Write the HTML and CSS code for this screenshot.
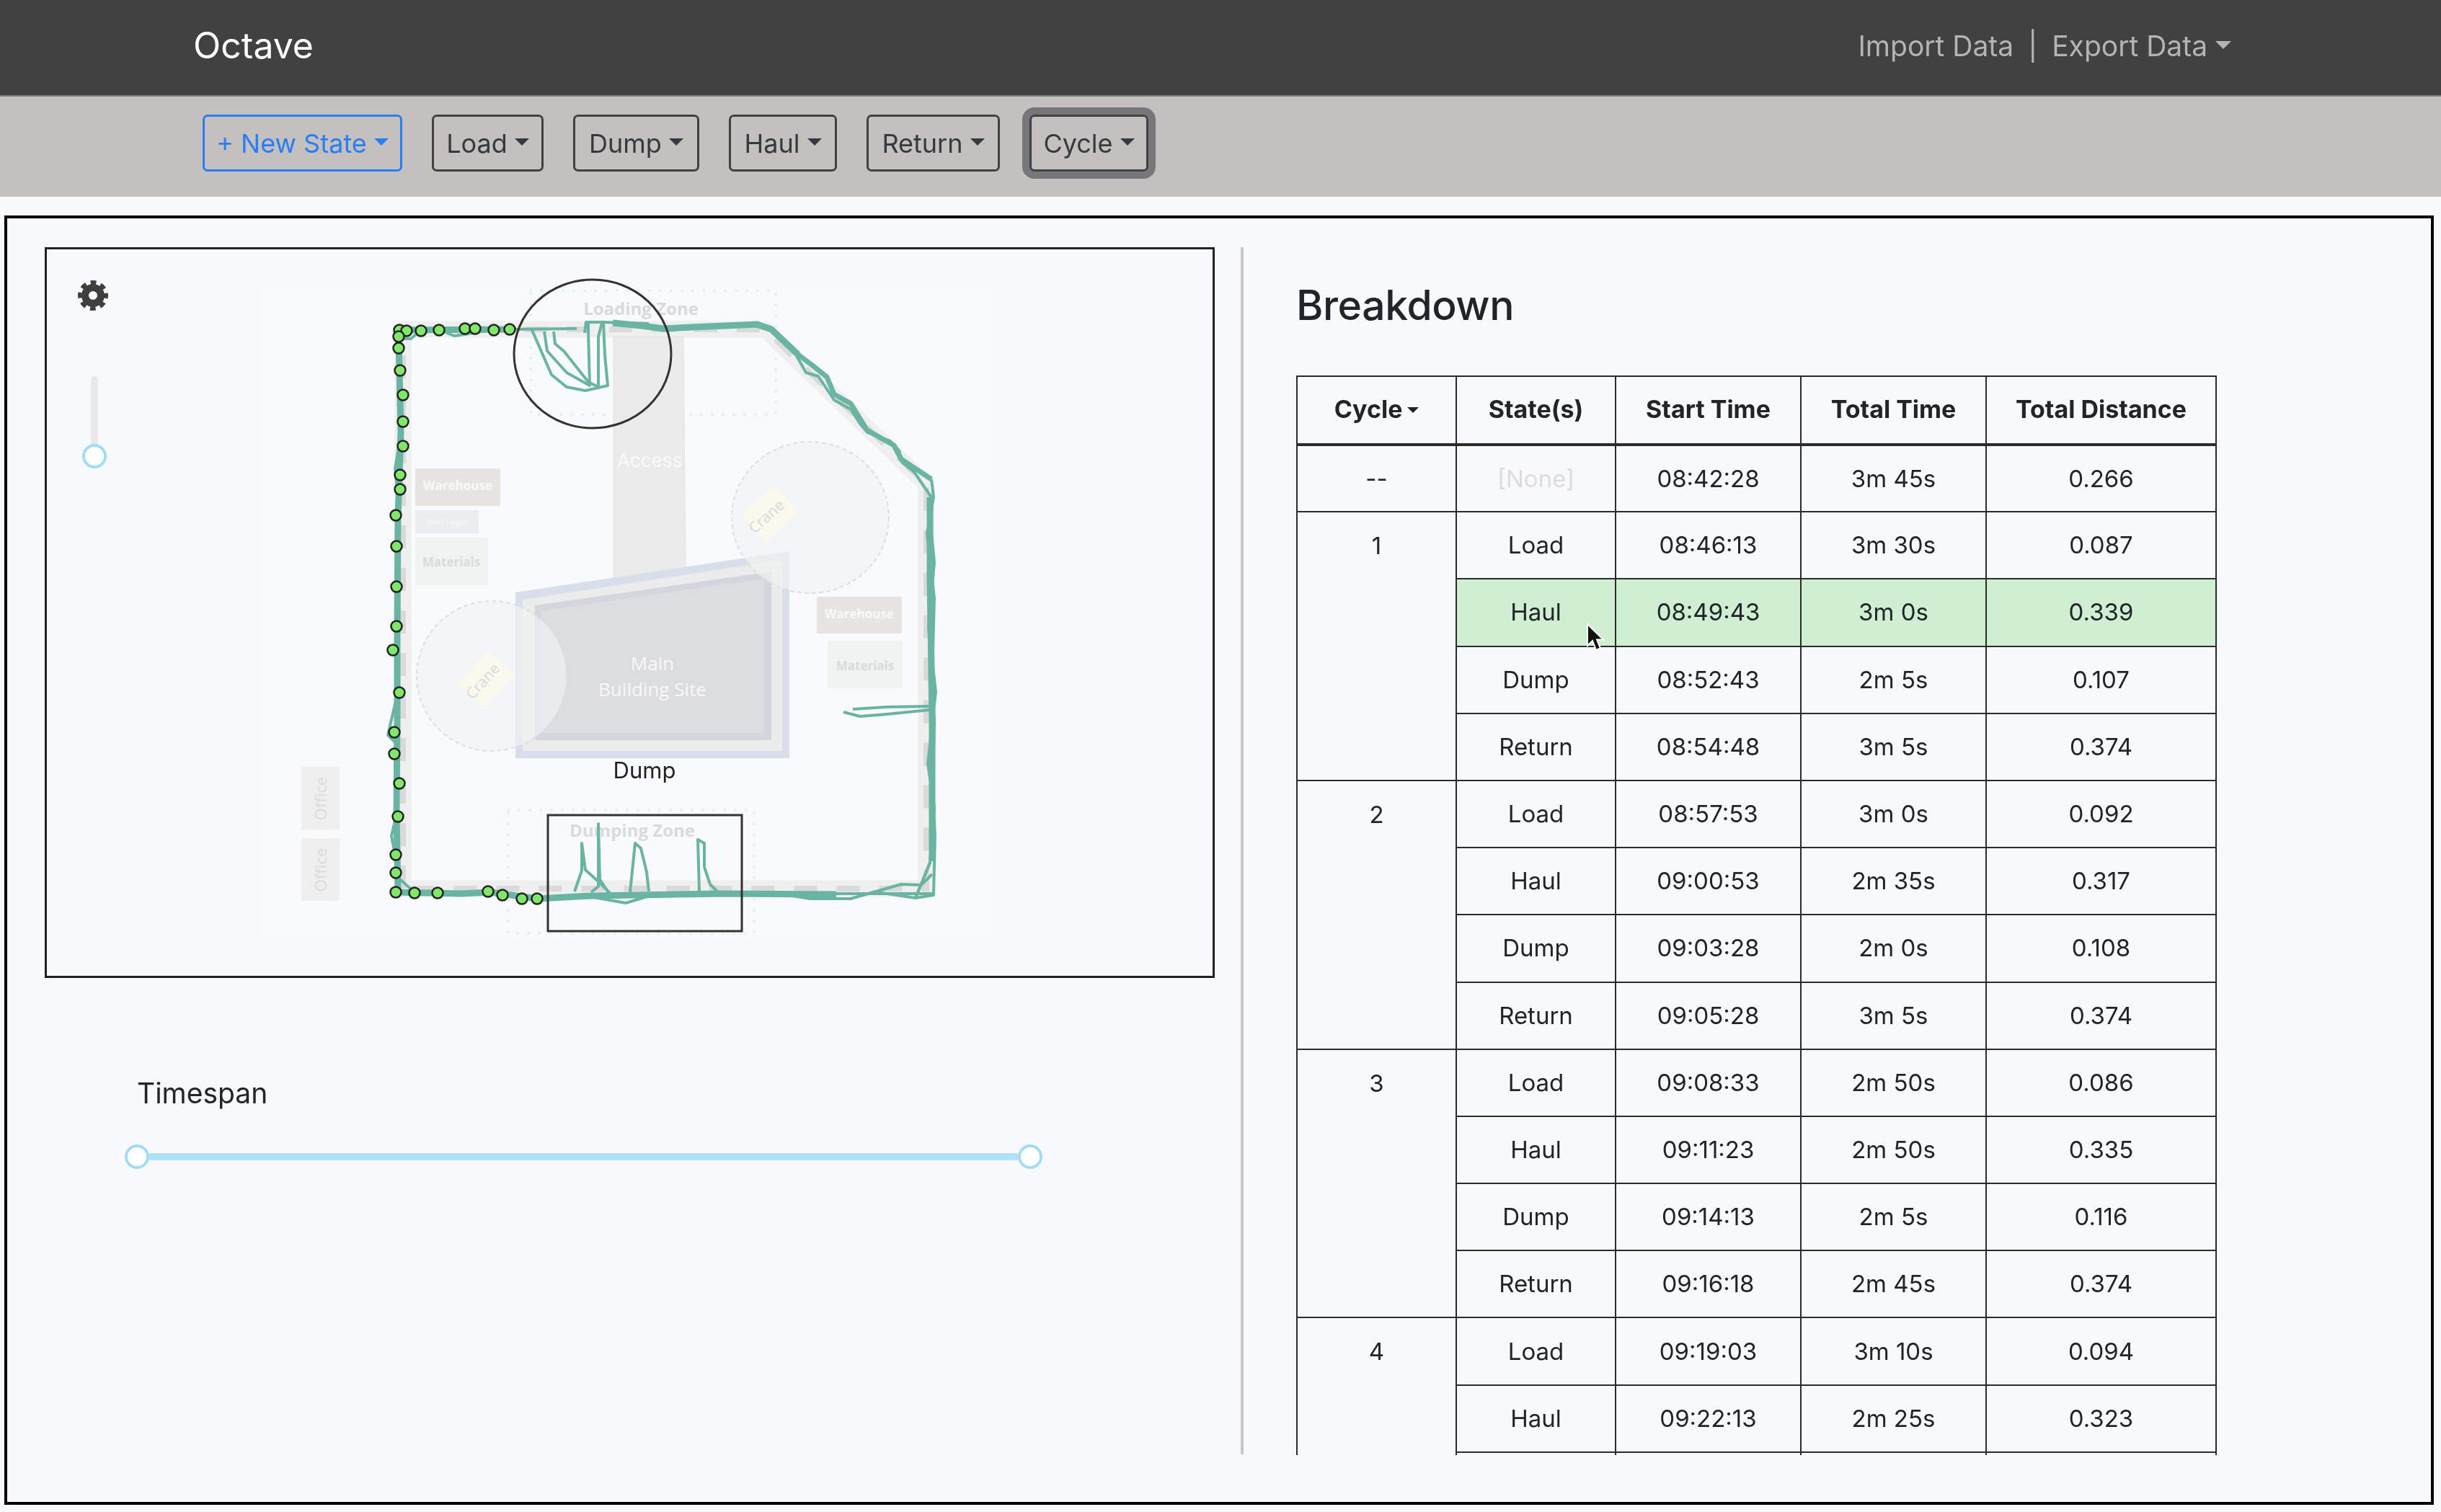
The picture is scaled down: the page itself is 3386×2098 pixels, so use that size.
FILE: index.html
```html
<!DOCTYPE html>
<html lang="en">
<head>
<meta charset="utf-8">
<title>Octave</title>
<link rel="stylesheet" href="styles.css">
</head>
<body>
<header class="navbar">
  <span class="brand">Octave</span>
  <nav class="nav-links">
    <span>Import Data</span><span class="sep">|</span><span class="caret-after">Export Data</span>
  </nav>
</header>
<div class="toolbar">
  <button class="btn btn-new w-new">+ New State</button>
  <button class="btn w-load">Load</button>
  <button class="btn w-dump">Dump</button>
  <button class="btn w-haul">Haul</button>
  <button class="btn w-return">Return</button>
  <button class="btn btn-focus w-cycle">Cycle</button>
</div>
<main class="frame">
  <section class="left">
    <div class="map">
      <svg class="map-svg" viewBox="64 345 1619 1010" xmlns="http://www.w3.org/2000/svg">
        <rect x="358" y="396" width="1032" height="914" fill="#f9fafb"/>
        <!-- zones -->
        <rect class="zone" x="736" y="403" width="340" height="172"/>
        <rect class="zone" x="705" y="1124" width="341" height="171"/>
        <text class="lbl-zone" x="889" y="437">Loading Zone</text>
        <text class="lbl-zone" x="877" y="1161">Dumping Zone</text>
        <!-- road -->
        <path class="road" d="M559 1233V457H1061L1285 672V1233Z"/>
        <path class="road-dash" d="M559 1233V457H1061L1285 672V1233Z"/>
        <!-- access -->
        <polygon points="851,467 948,467 951,792 851,810" fill="#ebebec" stroke="#e2e2e3" stroke-width="1"/>
        <text class="lbl-white" x="901" y="648">Access</text>
        <!-- buildings -->
        <polygon points="715,822 1095,765 1095,1052 715,1052" fill="#d9dfea"/>
        <polygon points="725,832 1085,777 1085,1042 725,1042" fill="#ececec"/>
        <polygon points="742,840 1070,793 1070,1027 742,1027" fill="#d3d7dd"/>
        <polygon points="750,848 1060,803 1060,1017 750,1017" fill="#dcdddf"/>
        <text class="lbl-main" x="905" y="930">Main</text>
        <text class="lbl-main" x="905" y="966">Building Site</text>
        <!-- cranes -->
        <ellipse class="crane" cx="1124" cy="718" rx="109" ry="105"/>
        <ellipse class="crane" cx="682" cy="938" rx="104" ry="104"/>
        <rect class="crane-tag" x="1037" y="688" width="62" height="50" transform="rotate(-42 1068 713)"/>
        <rect class="crane-tag" x="643" y="918" width="62" height="50" transform="rotate(-48 674 943)"/>
        <text class="lbl-crane" transform="translate(1068 722) rotate(-42)">Crane</text>
        <text class="lbl-crane" transform="translate(675 950) rotate(-48)">Crane</text>
        <!-- stores -->
        <rect x="576" y="650" width="118" height="52" fill="#e8e4e1"/>
        <text class="lbl-store-w" x="635" y="680">Warehouse</text>
        <rect x="576" y="708" width="88" height="32" fill="#ecedee"/>
        <text class="lbl-tiny" x="620" y="728">Steel Depot</text>
        <rect x="576" y="746" width="101" height="66" fill="#f1f2f2"/>
        <text class="lbl-store" x="626" y="786">Materials</text>
        <rect x="1133" y="828" width="118" height="51" fill="#e8e4e1"/>
        <text class="lbl-store-w" x="1192" y="858">Warehouse</text>
        <rect x="1148" y="889" width="104" height="66" fill="#f1f2f2"/>
        <text class="lbl-store" x="1200" y="930">Materials</text>
        <rect class="office" x="418" y="1064" width="53" height="87"/>
        <rect class="office" x="418" y="1163" width="53" height="87"/>
        <text class="lbl-office" transform="translate(453 1108) rotate(-90)">Office</text>
        <text class="lbl-office" transform="translate(453 1207) rotate(-90)">Office</text>
        <!-- tracks -->
        <g class="track">
          <polyline class="thick" points="553,458 707,457"/>
          <polyline points="610,458 630,466 650,463 680,458"/>
          <polyline points="707,457 800,456"/>
          <polyline points="738,458 765,520 786,537 812,542 843,535 839,493 837,448"/>
          <polyline points="755,460 759,487 786,517 818,535 816,460 816,447"/>
          <polyline points="768,460 770,477 782,487 816,530 830,537 830,467 835,448"/>
          <polyline points="811,462 813,447 835,447 900,449"/>
          <polyline class="thick" points="850,448 890,452 920,456 960,454 1050,450 1070,457 1107,492"/>
          <polyline class="mid" points="1070,457 1107,492 1127,507 1147,523 1157,547 1180,560 1203,597 1240,618 1250,637 1292,665"/>
          <polyline points="1100,485 1118,517 1135,522 1147,540 1157,555 1180,568 1193,588 1203,600 1235,612 1247,625 1252,642 1268,655 1292,690"/>
          <polyline points="1292,665 1295,690 1286,740 1296,830 1293,940 1296,1000 1294,1100 1297,1160 1295,1242 1270,1246"/>
          <polyline class="thick" points="1290,690 1290,800 1293,1000 1293,1100 1293,1195"/>
          <polyline points="1288,700 1296,780 1288,870 1298,960 1287,1060 1296,1120 1290,1197 1270,1246"/>
          <polyline points="1183,984 1230,981 1290,980"/>
          <polyline points="1170,988 1193,994 1230,991 1290,985"/>
          <polyline class="thick" points="549,1238 640,1240 680,1238 745,1247 820,1243 1000,1240 1160,1241"/>
          <polyline points="1093,1242 1123,1247 1180,1247 1250,1227 1278,1228 1293,1213"/>
          <polyline points="1217,1238 1270,1246 1290,1197"/>
          <polyline points="1140,1240 1295,1240"/>
          <polyline points="812,1243 868,1253 904,1242"/>
          <polyline points="797,1237 807,1208 807,1170 812,1207 832,1225 849,1242"/>
          <polyline points="820,1238 830,1230 830,1143 832,1220 845,1240"/>
          <polyline points="874,1238 881,1170 889,1177 897,1210 900,1237"/>
          <polyline points="970,1237 968,1165 977,1170 977,1203 985,1227 995,1237"/>
          <polyline class="thick" points="553,470 556,600 552,720 551,880 551,1000 550,1130 552,1238"/>
          <polyline points="553,620 548,650 552,690"/>
          <polyline points="552,960 538,1020 548,1030"/>
          <polyline points="550,1130 543,1160 549,1190"/>
          <polyline points="556,470 570,470 584,458"/>
          <polyline points="549,1215 575,1238"/>
        </g>
        <!-- selection shapes -->
        <ellipse class="select" cx="822" cy="491" rx="109" ry="103"/>
        <rect class="select" x="760" y="1131" width="269" height="161"/>
        <text class="lbl-dump" x="894" y="1080">Dump</text>
        <!-- path points -->
        <g class="pts">
          <circle cx="554" cy="458" r="7.5"/><circle cx="564" cy="459" r="7.5"/><circle cx="584" cy="459" r="7.5"/><circle cx="609" cy="458" r="7.5"/><circle cx="645" cy="456" r="7.5"/><circle cx="659" cy="456" r="7.5"/><circle cx="685" cy="458" r="7.5"/><circle cx="707" cy="457" r="7.5"/><circle cx="553" cy="467" r="7.5"/><circle cx="553" cy="483" r="7.5"/><circle cx="555" cy="514" r="7.5"/><circle cx="559" cy="548" r="7.5"/><circle cx="559" cy="585" r="7.5"/><circle cx="559" cy="619" r="7.5"/><circle cx="555" cy="659" r="7.5"/><circle cx="555" cy="679" r="7.5"/><circle cx="549" cy="715" r="7.5"/><circle cx="550" cy="758" r="7.5"/><circle cx="550" cy="814" r="7.5"/><circle cx="550" cy="869" r="7.5"/><circle cx="545" cy="902" r="7.5"/><circle cx="554" cy="961" r="7.5"/><circle cx="547" cy="1016" r="7.5"/><circle cx="547" cy="1046" r="7.5"/><circle cx="554" cy="1087" r="7.5"/><circle cx="552" cy="1133" r="7.5"/><circle cx="549" cy="1186" r="7.5"/><circle cx="549" cy="1211" r="7.5"/><circle cx="549" cy="1238" r="7.5"/><circle cx="575" cy="1239" r="7.5"/><circle cx="607" cy="1239" r="7.5"/><circle cx="677" cy="1237" r="7.5"/><circle cx="697" cy="1242" r="7.5"/><circle cx="724" cy="1247" r="7.5"/><circle cx="745" cy="1247" r="7.5"/>
        </g>
      </svg>
      <svg class="gear" viewBox="0 0 44 44" xmlns="http://www.w3.org/2000/svg">
        <circle class="gear-teeth" cx="22" cy="22" r="17.5"/>
        <circle class="gear-ring" cx="22" cy="22" r="11"/>
      </svg>
      <div class="vslider"><span class="vtrack"></span><span class="thumb"></span></div>
    </div>
    <div class="timespan">
      <div class="timespan-label">Timespan</div>
      <div class="hslider"><span class="thumb"></span><span class="htrack"></span><span class="thumb"></span></div>
    </div>
  </section>
  <div class="divider"></div>
  <section class="right">
    <h1 class="title">Breakdown</h1>
    <div class="table-wrap">
      <table class="grid">
        <colgroup><col class="c1"><col class="c2"><col class="c3"><col class="c3"><col class="c5"></colgroup>
        <thead>
          <tr><th><span class="caret-sm">Cycle</span></th><th>State(s)</th><th>Start Time</th><th>Total Time</th><th>Total Distance</th></tr>
        </thead>
        <tbody>
          <tr><td class="dash">--</td><td class="none">[None]</td><td>08:42:28</td><td>3m 45s</td><td>0.266</td></tr>
          <tr><td rowspan="4" class="cyc">1</td><td>Load</td><td>08:46:13</td><td>3m 30s</td><td>0.087</td></tr>
          <tr class="hl"><td>Haul</td><td>08:49:43</td><td>3m 0s</td><td>0.339</td></tr>
          <tr><td>Dump</td><td>08:52:43</td><td>2m 5s</td><td>0.107</td></tr>
          <tr><td>Return</td><td>08:54:48</td><td>3m 5s</td><td>0.374</td></tr>
          <tr><td rowspan="4" class="cyc">2</td><td>Load</td><td>08:57:53</td><td>3m 0s</td><td>0.092</td></tr>
          <tr><td>Haul</td><td>09:00:53</td><td>2m 35s</td><td>0.317</td></tr>
          <tr><td>Dump</td><td>09:03:28</td><td>2m 0s</td><td>0.108</td></tr>
          <tr><td>Return</td><td>09:05:28</td><td>3m 5s</td><td>0.374</td></tr>
          <tr><td rowspan="4" class="cyc">3</td><td>Load</td><td>09:08:33</td><td>2m 50s</td><td>0.086</td></tr>
          <tr><td>Haul</td><td>09:11:23</td><td>2m 50s</td><td>0.335</td></tr>
          <tr><td>Dump</td><td>09:14:13</td><td>2m 5s</td><td>0.116</td></tr>
          <tr><td>Return</td><td>09:16:18</td><td>2m 45s</td><td>0.374</td></tr>
          <tr><td rowspan="3" class="cyc">4</td><td>Load</td><td>09:19:03</td><td>3m 10s</td><td>0.094</td></tr>
          <tr><td>Haul</td><td>09:22:13</td><td>2m 25s</td><td>0.323</td></tr>
          <tr class="cutoff"><td></td><td></td><td></td><td></td></tr>
        </tbody>
      </table>
      <svg class="cursor" viewBox="0 0 26 42" xmlns="http://www.w3.org/2000/svg"><path d="M2 2V32L9 25L14 38L20 35.500L15 23.500H24Z" fill="#111" stroke="#fff" stroke-width="2"/></svg>
    </div>
  </section>
</main>
</body>
</html>
```
FILE: styles.css
```css
* { box-sizing: border-box; }
html, body { margin: 0; padding: 0; }
body {
  width: 3386px;
  height: 2098px;
  overflow: hidden;
  background: #f8f9fa;
  color: #212529;
  font-family: Inter, "Liberation Sans", sans-serif;
  filter: blur(.6px);
}

/* navbar */
.navbar {
  height: 134px;
  background: #414141;
  border-bottom: 2px solid #7a7a7a;
  display: flex;
  align-items: center;
  justify-content: space-between;
  padding: 0 291px 6px 268px;
}
.brand { color: #fff; font-size: 50px; font-weight: 400; }
.nav-links { display: flex; align-items: center; color: #b4b4b4; font-size: 39px; }
.sep { margin: 0 20px; }
.caret-after::after, .btn::after, .caret-sm::after {
  content: "";
  display: inline-block;
  vertical-align: .255em;
  margin-left: .28em;
  border-top: .3em solid currentColor;
  border-left: .3em solid transparent;
  border-right: .3em solid transparent;
}

/* toolbar */
.toolbar {
  height: 139px;
  background: #c3c0be;
  display: flex;
  align-items: flex-start;
  gap: 41px;
  padding: 25px 0 0 281px;
}
.btn {
  height: 79px;
  padding: 0;
  background: transparent;
  border: 3px solid #414141;
  border-radius: 7px;
  color: #343a40;
  font: 400 36px Inter, "Liberation Sans", sans-serif;
  white-space: nowrap;
}
.w-new { width: 277px; }
.w-load { width: 155px; }
.w-dump { width: 175px; }
.w-haul { width: 150px; }
.w-return { width: 185px; }
.w-cycle { width: 165px; }
.btn-new { border-color: #2a7ef5; color: #2a7ef5; }
.btn-focus { box-shadow: 0 0 0 10px #77767a; }

/* frame */
.frame {
  margin: 26px 0 0 6px;
  width: 3370px;
  height: 1789px;
  border: 4px solid #000;
  display: flex;
  padding: 40px 0 66px 52px;
}
.left { width: 1623px; flex: none; }
.map {
  position: relative;
  height: 1014px;
  border: 3px solid #222;
}
.map-svg { position: absolute; left: -1px; top: -1px; display: block; width: 1619px; height: 1010px; }
.gear { position: absolute; left: 42px; top: 42px; width: 44px; height: 44px; }
.gear-teeth { fill: none; stroke: #3f3f3f; stroke-width: 7; stroke-dasharray: 7.5 6.24; stroke-dashoffset: 3.75; }
.gear-ring { fill: none; stroke: #3f3f3f; stroke-width: 10; }
.vslider {
  position: absolute;
  left: 49px;
  top: 176px;
  width: 34px;
  display: flex;
  flex-direction: column;
  align-items: center;
}
.vtrack { width: 10px; height: 97px; margin-bottom: -3px; background: #e9e9e9; border-radius: 5px 5px 0 0; }
.thumb {
  flex: none;
  width: 34px;
  height: 34px;
  border-radius: 50%;
  background: #fff;
  border: 4px solid #a4dcf6;
  position: relative;
}

/* map svg styling */
.zone { fill: none; stroke: #dcf2ea; stroke-width: 4; stroke-dasharray: 0 15; stroke-linecap: round; }
.road { fill: none; stroke: #efefef; stroke-width: 23; stroke-linejoin: round; }
.road-dash { fill: none; stroke: #dadada; stroke-width: 8; stroke-dasharray: 32 27; }
.crane { fill: #f1f2f2; fill-opacity: .65; stroke: #dedfdf; stroke-width: 2; stroke-dasharray: 6 4; }
.crane-tag { fill: #fbf8ed; }
.office { fill: #efefef; }
.track polyline { fill: none; stroke: #69b4a2; stroke-width: 4; stroke-linejoin: round; }
.track .thick { stroke-width: 9; }
.track .mid { stroke-width: 7; }
.select { fill: none; stroke: #333; stroke-width: 3; }
.pts circle { fill: #7fe868; stroke: #222; stroke-width: 2.5; }
.map-svg text { text-anchor: middle; font-family: "Open Sans", "Noto Sans", sans-serif; }
.lbl-zone { font-size: 24px; font-weight: 700; fill: #d9dadb; }
.map-svg .lbl-white { font-size: 26px; fill: #fafafa; font-family: Inter, sans-serif; }
.lbl-main { font-size: 26px; fill: #f8f8f9; }
.lbl-crane { font-size: 21px; fill: #d8dadd; }
.lbl-store-w { font-size: 17px; font-weight: 700; fill: #f9f8f7; }
.lbl-tiny { font-size: 10px; font-weight: 700; fill: #f6f6f6; }
.lbl-store { font-size: 17px; font-weight: 700; fill: #dadbdc; }
.lbl-office { font-size: 22px; fill: #dadbdc; }
.map-svg .lbl-dump { font-family: Inter, sans-serif; font-size: 31px; fill: #222; }

/* timespan */
.timespan { padding: 136px 0 0 111px; }
.timespan-label { font-size: 39px; line-height: 48px; margin-left: 17px; }
.hslider { display: flex; align-items: center; width: 1273px; margin-top: 47px; }
.htrack { flex: 1; height: 10px; background: #b0e2f8; }

/* divider */
.divider { flex: none; width: 4px; margin-left: 36px; background: #c8c8ca; }

/* right */
.right { flex: none; width: 1300px; margin-left: 73px; }
.title { margin: 0; font-size: 57px; font-weight: 500; line-height: 70px; padding-top: 46px; color: #212529; letter-spacing: -.4px; }
.table-wrap { position: relative; margin-top: 62px; height: 1498px; overflow: hidden; }
.grid { border-collapse: collapse; table-layout: fixed; width: 1275px; font-size: 33px; text-align: center; }
.c1, .c2 { width: 221px; }
.c3 { width: 257px; }
.c5 { width: 319px; }
.grid th, .grid td { border: 2px solid #2b2b2b; padding: 0 0 1px; text-align: center; }
.grid thead tr { height: 95px; }
.grid th { font-weight: 700; font-size: 34px; border-bottom-width: 4px; padding-bottom: 3px; }
.grid tbody tr { height: 93.200px; }
.caret-sm::after { border-top-width: .25em; border-left-width: .25em; border-right-width: .25em; vertical-align: .2em; margin-left: .2em; }
.none { color: #dcdcde; }
.hl td { background: #cfeed2; }
.cyc { vertical-align: top; padding-top: 26px !important; }
.grid .cutoff td { height: 30px; }
.cursor { position: absolute; left: 402px; top: 343px; width: 26px; height: 42px; }
```
